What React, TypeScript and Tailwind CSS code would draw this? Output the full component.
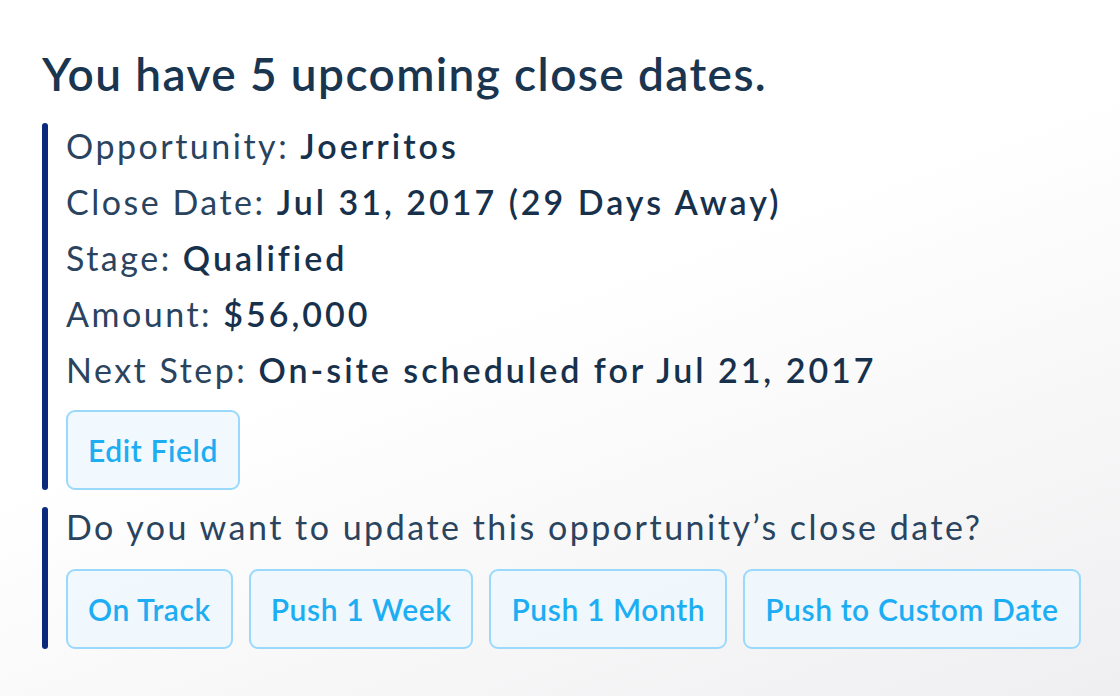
import React from "react";

const font = { fontFamily: "Lato, 'Open Sans', sans-serif" };

function Btn({ children }: { children: React.ReactNode }) {
  return (
    <div className="h-[80px] px-[20px] flex items-center rounded-[9px] border-2 border-[#9ad9fb] bg-[#eef7fe]/80 text-[#1cadf3] text-[30px] font-semibold tracking-[0.6px] whitespace-nowrap">
      {children}
    </div>
  );
}

export default function App() {
  const rows: [string, string][] = [
    ["Opportunity:", "Joerritos"],
    ["Close Date:", "Jul 31, 2017 (29 Days Away)"],
    ["Stage:", "Qualified"],
    ["Amount:", "$56,000"],
    ["Next Step:", "On-site scheduled for Jul 21, 2017"],
  ];
  return (
    <div
      className="w-[1120px] h-[696px] overflow-hidden bg-[linear-gradient(160deg,#ffffff_45%,#efeff1_100%)] pl-[42px] pt-[46px] text-[#1d3954]"
      style={font}
    >
      <h1 className="text-[46px] leading-[56px] font-semibold tracking-[1.4px] text-[#1a3550]">You have 5 upcoming close dates.</h1>
      <div className="mt-[16px] flex">
        <div className="w-[6px] mt-[5px] rounded-full bg-[#0b2a7e]" />
        <div className="ml-[18px]">
          {rows.map(([k, v]) => (
            <div key={k} className="text-[34px] leading-[56px] tracking-[2.5px] text-[#2a4460]">
              {k} <span className="font-semibold tracking-[3px] text-[#17314c]">{v}</span>
            </div>
          ))}
          <div className="mt-[12px] flex">
            <Btn>Edit Field</Btn>
          </div>
        </div>
      </div>
      <div className="mt-[17px] flex">
        <div className="w-[6px] rounded-full bg-[#0b2a7e]" />
        <div className="ml-[18px] -mt-[8px]">
          <div className="text-[34px] leading-[56px] tracking-[2.5px] text-[#2a4460]">
            Do you want to update this opportunity’s close date?
          </div>
          <div className="mt-[14px] flex gap-[16px]">
            <Btn>On Track</Btn>
            <Btn>Push 1 Week</Btn>
            <Btn>Push 1 Month</Btn>
            <Btn>Push to Custom Date</Btn>
          </div>
        </div>
      </div>
    </div>
  );
}
